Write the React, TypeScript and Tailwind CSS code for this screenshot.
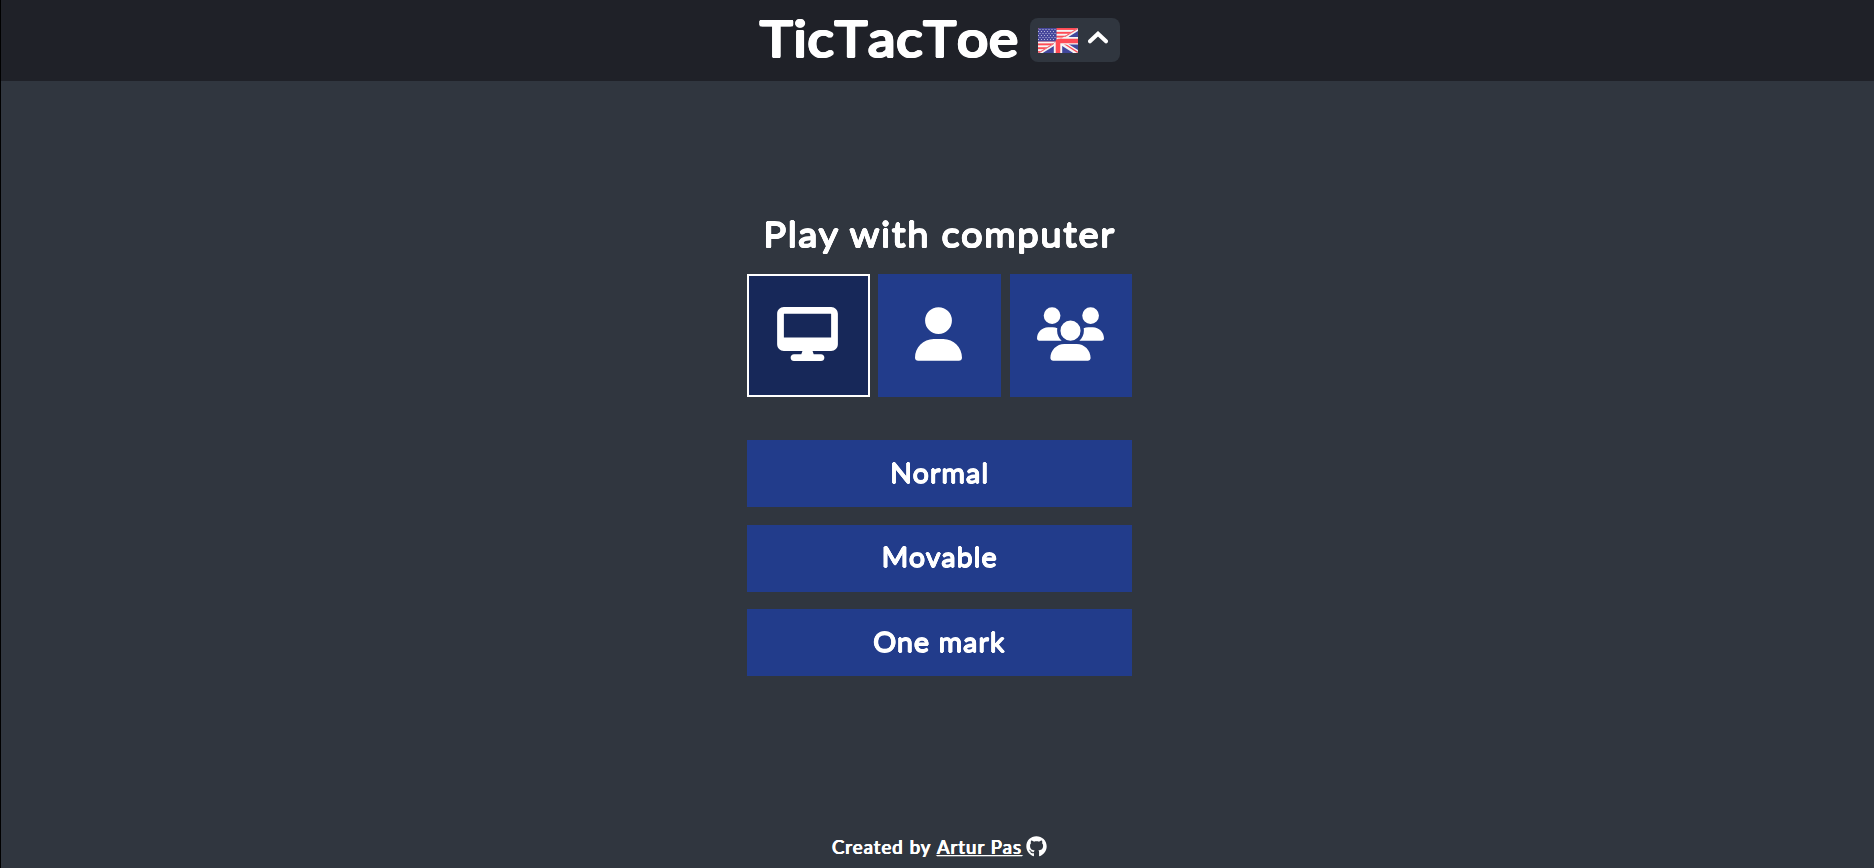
import React from "react";
import { FaDesktop, FaGithub, FaUser, FaUsers } from "react-icons/fa6";

const stripes = [0, 1, 2, 3, 4, 5, 6];
const starRows = [1.5, 3.5, 5.5, 7.5, 9.5, 11.5];
const starColumns = [2, 5, 8, 11, 14, 17];

function Flag() {
  return (
    <svg width="40" height="25" viewBox="0 0 40 25" aria-hidden="true">
      <defs>
        <clipPath id="flag">
          <rect width="40" height="25" rx="1.5" />
        </clipPath>
        <clipPath id="lower">
          <path d="M40 0V25H0Z" />
        </clipPath>
      </defs>
      <g clipPath="url(#flag)">
        <rect width="40" height="25" fill="#f5f5f5" />
        {stripes.map((i) => (
          <rect key={i} y={i * 3.846} width="40" height="1.923" fill="#ff4b55" />
        ))}
        <rect width="18.5" height="13.4" fill="#46479b" />
        {starRows.map((y, r) =>
          starColumns.map((x) => (
            <circle key={`${x}-${y}`} cx={x - (r % 2) * 1.5} cy={y} r="0.6" fill="#c8cbe6" />
          )),
        )}
        <g clipPath="url(#lower)">
          <rect width="40" height="25" fill="#41479b" />
          <path d="M0 25 40 0M20 12.5 40 25" stroke="#f5f5f5" strokeWidth="5" />
          <path d="M0 25 20 12.5 40 0" stroke="#ff4b55" strokeWidth="1.6" />
          <path d="M22 13 40 24.5" stroke="#ff4b55" strokeWidth="1.4" />
        </g>
        <path d="M15.8 25V14.5H0V10.5H19.5L22 9H40V16.5H24.2V25Z" fill="#f5f5f5" clipPath="url(#lower)" />
        <path d="M17.7 25V12L20.5 10.8H40V15.2H22.3V25Z" fill="#ff4b55" />
      </g>
    </svg>
  );
}

const modes = ["Normal", "Movable", "One mark"];

export default function App() {
  return (
    <div className="flex h-[868px] flex-col border-l border-black bg-[#30363f] font-['Lato','Open_Sans',sans-serif] text-white">
      <header className="flex h-[81px] shrink-0 justify-center bg-[#1f2128] pl-[3px] pt-[18px]">
        <h1 className="mr-[10px] h-[44px] w-[261px] origin-left scale-x-[1.08] whitespace-nowrap pl-px text-[51px] leading-[40px] tracking-[0.8px] [font-kerning:none] [text-shadow:1.4px_0_#fff,-1.4px_0_#fff,0_1.4px_#fff,0_-1.4px_#fff,1px_1px_#fff,-1px_1px_#fff,1px_-1px_#fff,-1px_-1px_#fff]">
          TicTacToe
        </h1>
        <button className="flex h-11 w-[90px] items-center rounded-lg bg-[#30363f] pl-2" aria-label="Language">
          <Flag />
          <svg className="mb-1.5 ml-2.5" width="20" height="13" viewBox="0 0 20 13" fill="none" aria-hidden="true">
            <path d="M2 10.3 10 2.7 18 10.3" stroke="white" strokeWidth="4" strokeLinecap="round" />
          </svg>
        </button>
      </header>
      <main className="ml-[746px] flex w-[385px] flex-1 flex-col pt-[131px]">
        <h2 className="flex h-[62px] scale-x-[1.09] items-start justify-center whitespace-nowrap text-[35px] leading-[43px] tracking-[1.5px] [text-shadow:0.7px_0_#fff,-0.7px_0_#fff,0_0.7px_#fff,0_-0.7px_#fff,0.5px_0.5px_#fff,-0.5px_0.5px_#fff,0.5px_-0.5px_#fff,-0.5px_-0.5px_#fff]">
          Play with computer
        </h2>
        <div className="flex h-[123px]">
          <button className="flex w-[123px] items-start justify-center border-2 border-white bg-[#172859] pr-[3px] pt-[31px]" aria-label="Computer">
            <FaDesktop className="h-[54px] w-[61px]" />
          </button>
          <button className="ml-2 flex w-[123px] items-start justify-center bg-[#223c8b] pr-[2px] pt-[33px]" aria-label="Player">
            <FaUser className="h-[54px] w-[47px]" />
          </button>
          <button className="ml-[9px] flex w-[122px] items-start justify-center bg-[#223c8b] pr-px pt-[33px]" aria-label="Online">
            <FaUsers className="h-[54px] w-[67px]" />
          </button>
        </div>
        <div className="mt-[43px] flex h-[236px] flex-col justify-between">
          {modes.map((mode) => (
            <button
              key={mode}
              className="flex h-[67px] items-center justify-center bg-[#223c8b] pb-px text-[27px] tracking-[1px] [text-shadow:0.6px_0_#fff,-0.6px_0_#fff,0_0.6px_#fff,0_-0.6px_#fff,0.4px_0.4px_#fff,-0.4px_-0.4px_#fff]"
            >
              <span className="scale-x-[1.06]">{mode}</span>
            </button>
          ))}
        </div>
      </main>
      <footer className="flex h-[36px] shrink-0 items-start justify-center pl-[4px] text-[18.5px] leading-[31px] [text-shadow:0.5px_0_#fff,-0.5px_0_#fff,0_0.3px_#fff]">
        <span className="tracking-[1.1px]">Created by&nbsp;</span>
        <a className="tracking-[1.1px] underline">Artur Pas</a>
        <FaGithub className="ml-1 mt-1 size-[21px]" />
      </footer>
    </div>
  );
}
